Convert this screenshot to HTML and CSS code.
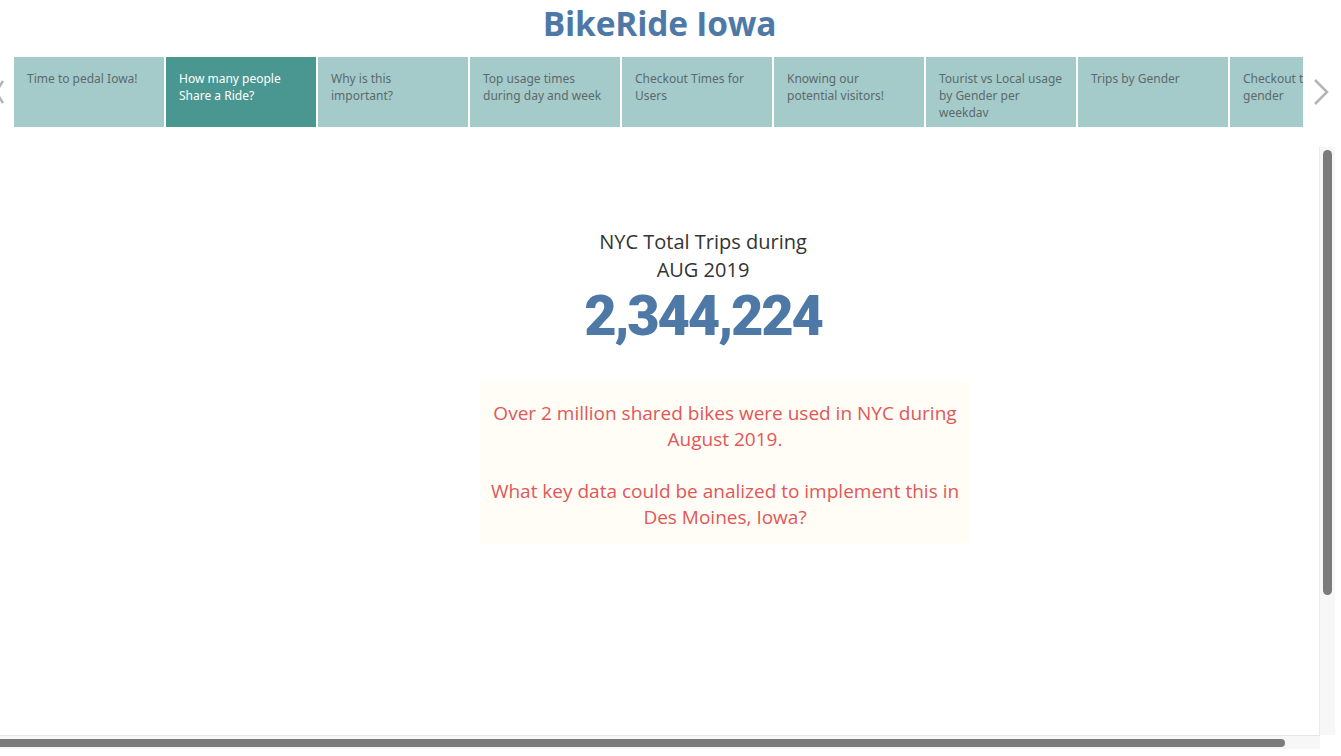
FILE: index.html
```html
<!DOCTYPE html>
<html>
<head>
<meta charset="utf-8">
<link rel="stylesheet" href="styles.css">
</head>
<body>
<div class="page">
  <h1 class="title">BikeRide Iowa</h1>
  <div class="nav">
    <div class="arrow arrow-left"><svg width="10" height="24" viewBox="0 0 10 24"><path d="M8 1 L1 12 L8 23" fill="none" stroke="#b5b5b5" stroke-width="2.5"/></svg></div>
    <div class="tabs">
      <div class="tab">Time to pedal Iowa!</div>
      <div class="tab active">How many people<br>Share a Ride?</div>
      <div class="tab">Why is this<br>important?</div>
      <div class="tab">Top usage times<br>during day and week</div>
      <div class="tab">Checkout Times for<br>Users</div>
      <div class="tab">Knowing our<br>potential visitors!</div>
      <div class="tab">Tourist vs Local usage<br>by Gender per<br>weekdav</div>
      <div class="tab">Trips by Gender</div>
      <div class="tab">Checkout times by<br>gender</div>
    </div>
    <div class="arrow arrow-right"><svg width="16" height="26" viewBox="0 0 16 26"><path d="M2 1 L14 13 L2 25" fill="none" stroke="#b5b5b5" stroke-width="2.5"/></svg></div>
  </div>
  <div class="viewport">
    <div class="content">
      <div class="kpi">
        <div class="kpi-label">NYC Total Trips during<br>AUG 2019</div>
        <div class="kpi-value">2,344,224</div>
      </div>
      <div class="note">
        <p>Over 2 million shared bikes were used in NYC during August 2019.</p>
        <p>What key data could be analized to implement this in Des Moines, Iowa?</p>
      </div>
    </div>
    <div class="vscroll"><div class="vthumb"></div></div>
  </div>
  <div class="hscroll"><div class="hthumb"></div></div>
</div>
</body>
</html>
```
FILE: styles.css
```css
html, body {
  margin: 0;
  padding: 0;
  background: #ffffff;
}
.page {
  width: 1341px;
  height: 756px;
  box-sizing: border-box;
  padding-bottom: 7px;
  overflow: hidden;
  display: flex;
  flex-direction: column;
  font-family: "Open Sans", "Noto Sans", sans-serif;
}
.title {
  margin: 0;
  height: 46px;
  padding-top: 2px;
  text-align: center;
  font-size: 33.5px;
  line-height: 42px;
  font-weight: 700;
  color: #4e79a7;
  letter-spacing: -0.2px;
  padding-right: 22px;
}
.nav {
  margin-top: 9px;
  height: 70px;
  display: flex;
  align-items: center;
  position: relative;
}
.arrow {
  display: flex;
  align-items: center;
}
.arrow-left {
  width: 14px;
  margin-left: -5px;
  padding-right: 5px;
}
.arrow-right {
  margin-left: 10px;
}
.tabs {
  width: 1289px;
  height: 70px;
  display: flex;
  gap: 2px;
  overflow: hidden;
}
.tab {
  flex: 0 0 150px;
  box-sizing: border-box;
  height: 70px;
  background: #a5caca;
  color: #5b6a6a;
  font-family: "Noto Sans", "Open Sans", sans-serif;
  font-size: 12px;
  line-height: 17px;
  padding: 13px 0 0 13px;
  white-space: nowrap;
  overflow: hidden;
}
.tab.active {
  background: #4a9791;
  color: #ffffff;
}
.viewport {
  margin-top: 20px;
  flex: 1;
  display: flex;
  min-height: 0;
}
.content {
  flex: 1;
  display: flex;
  flex-direction: column;
}
.kpi {
  margin-top: 81px;
  margin-left: 503px;
  width: 400px;
  text-align: center;
}
.kpi-label {
  font-family: "Open Sans", sans-serif;
  font-size: 20px;
  line-height: 28px;
  color: #333333;
}
.kpi-value {
  font-family: "Roboto", "Liberation Sans", sans-serif;
  font-weight: 900;
  font-size: 56px;
  line-height: 64px;
  color: #4e79a7;
  letter-spacing: -2.2px;
}
.note {
  margin-top: 34px;
  margin-left: 480px;
  width: 490px;
  height: 161px;
  box-sizing: border-box;
  background: #fffdf5;
  color: #e15759;
  font-family: "Open Sans", sans-serif;
  font-size: 19px;
  line-height: 26px;
  text-align: center;
  padding: 18px 4px 0 4px;
}
.note p {
  margin: 0 0 26px 0;
}
.vscroll {
  width: 15px;
  margin-right: 6px;
  background: #f7f7f7;
  border-left: 1px solid #ececec;
  display: flex;
  justify-content: center;
}
.vthumb {
  width: 9px;
  margin-top: 3px;
  height: 445px;
  border-radius: 5px;
  background: #7b7b7b;
}
.hscroll {
  flex: 0 0 14px;
  height: 14px;
  box-sizing: border-box;
  border-top: 1px solid #e6e6e6;
  background: #f7f7f7;
  width: 1320px;
  display: flex;
  align-items: center;
}
.hthumb {
  width: 1285px;
  height: 8px;
  border-radius: 0 4px 4px 0;
  background: #7b7b7b;
}
```
